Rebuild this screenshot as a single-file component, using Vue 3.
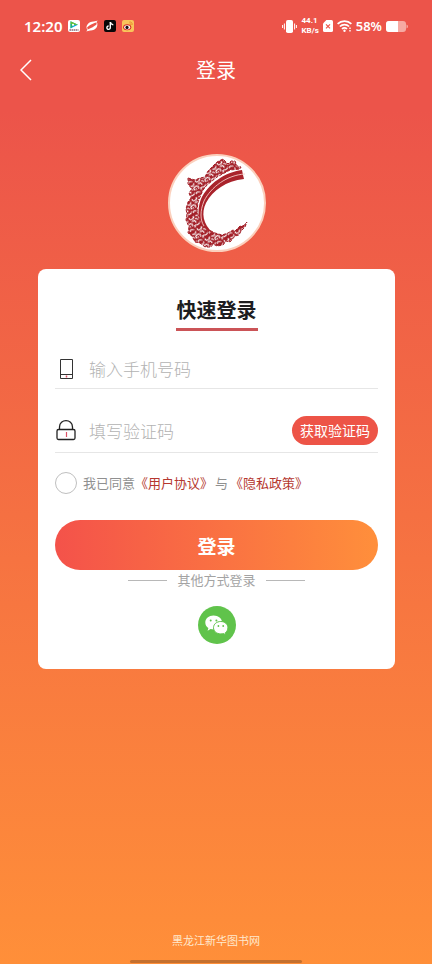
<template>
  <div class="page">
    <div class="status">
      <div class="status__side">
        <span class="status__time">12:20</span>
        <svg class="app-icon" viewBox="0 0 12 12">
          <rect width="12" height="12" rx="2" fill="#fff" />
          <path d="M2.5 1.2 10 4.8 2.5 8.4Z" fill="#12a8e8" />
          <path d="M2.5 1.2 10 4.8 6 5 2.5 4Z" fill="#63c132" />
          <path d="M2.5 4 6 5 2.5 8.4Z" fill="#27b36a" />
          <circle cx="5" cy="4.8" r="1.1" fill="#fff" />
          <path d="M1.5 10h9" stroke="#8a6b78" stroke-width="1.5" stroke-dasharray="1.5 .5" />
        </svg>
        <svg class="app-icon" viewBox="0 0 12 12" fill="#fff">
          <path d="M.6 8.2C-.2 4.4 4.4 .6 8.6 1.6L11.6 .6C10.8 3.2 3.6 4.2 .6 8.2Z" />
          <path d="M11.2 3.6C12.4 7.6 7.6 11.6 3.4 10.4L.4 11.4C1.2 8.8 8.2 7.8 11.2 3.6Z" />
          <path d="M1 8.2Q1.2 10 3.4 10.6M8.6 1.5Q10.8 2 11 3.8" fill="none" stroke="#fff" stroke-width=".8" />
        </svg>
        <svg class="app-icon" viewBox="0 0 12 12">
          <rect width="12" height="12" rx="2" fill="#090708" />
          <path d="M6.3 2v5.6A1.7 1.7 0 1 1 4.6 6" fill="none" stroke="#fff" stroke-width="1.4" />
          <path d="M6.4 2C6.7 3.8 7.8 4.6 9.3 4.7" fill="none" stroke="#fff" stroke-width="1.4" />
        </svg>
        <svg class="app-icon" viewBox="0 0 12 12">
          <rect width="12" height="12" rx="2" fill="#f9c45b" />
          <ellipse cx="5.2" cy="7.2" rx="4.1" ry="3" fill="#d72c25" />
          <ellipse cx="5.2" cy="7.3" rx="3" ry="2.1" fill="#fff" />
          <circle cx="5" cy="7.4" r="1.6" fill="#171011" />
          <path d="M7.2 2.1C9.4 1.7 10.6 3.2 10 5M7.7 3.7C8.7 3.6 9 4.2 8.7 5" fill="none" stroke="#e67d25" stroke-width=".8" />
        </svg>
      </div>
      <div class="status__side status__side--right">
        <svg class="vibrate" viewBox="0 0 15 13">
          <rect x="4" y="0" width="7" height="13" rx="1.8" fill="#fff" />
          <path d="M2.4 3.5v6M.6 5v3M12.6 3.5v6M14.4 5v3" stroke="#fff" stroke-width="1" />
        </svg>
        <span class="status__speed">
          <span>44.1</span>
          <span>KB/s</span>
        </span>
        <svg class="sim" viewBox="0 0 10 12">
          <path d="M3.4 0H8.4Q10 0 10 1.6V10.4Q10 12 8.4 12H1.6Q0 12 0 10.4V3.5Z" fill="#fff" />
          <path d="m3 4.4 4 4m0-4-4 4" stroke="#ed554a" stroke-width="1.2" />
        </svg>
        <svg class="wifi" viewBox="0 0 15 12" fill="none" stroke="#fff" stroke-width="1.7">
          <path d="M.6 3.8C4.4.1 10.6.1 14.4 3.8M2.9 6.5C5.4 4 9.6 4 12.1 6.5M5 9C6.4 7.6 8.6 7.6 10 9" />
          <circle cx="7.5" cy="10.7" r="1.2" fill="#fff" stroke="none" />
          <path d="M13 7.5v1.4M13 10v1.4" stroke-width="1.4" />
        </svg>
        <span class="status__percent">58%</span>
        <svg class="battery" viewBox="0 0 22 11">
          <rect width="20" height="11" rx="3" fill="#f6aaa3" />
          <path d="M3 0H12V11H3Q0 11 0 8V3Q0 0 3 0Z" fill="#fff" />
          <path d="M20.5 3.5Q22 4 22 5.5T20.5 7.5Z" fill="#f6aaa3" />
        </svg>
      </div>
    </div>

    <header class="header">
      <button class="header__back" type="button" aria-label="返回">
        <svg viewBox="0 0 12 22" fill="none" stroke="#fff" stroke-width="1.5">
          <path d="M11 1 1 11l10 10" />
        </svg>
      </button>
      <h1 class="header__title">登录</h1>
    </header>

    <main class="content">
      <div class="logo">
        <svg viewBox="13 12 94 94">
          <defs>
            <pattern id="curls" width="14" height="13" patternUnits="userSpaceOnUse" patternTransform="rotate(-38)">
              <rect width="14" height="13" fill="#a31f28" />
              <path
                d="M0 2Q3 4.5 5 1.5M7.5 0Q7 3 9.5 3T12 1M1.5 8Q.5 5 4 5.2T5.5 9M7.5 5Q11.5 4 10.5 8M12.5 4 14 6.5M0 11.5Q2.5 9.5 4.5 12.5M7 11.5Q7 8.5 9.5 10T13.5 9.5M3.5 7.2 2.8 8.6"
                fill="none"
                stroke="#fff"
                stroke-width="1.2"
              />
            </pattern>
          </defs>
          <path
            d="M31 34 38 36 43 34 48 33 51 27 55 23 60 18 66 15 68 17 71 20 74 17 78 17 80 22 84 23 83 25 73 26 60 33 50 41 46 46 41 58 40 67 43 77 48 84 58 89 65 91 71 89 76 86 78 87 83 82 86 82 90 78 88 83 84 87 82 91 78 92 73 98 69 97 66 101 60 102 56 100 54 103 48 103 43 99 38 98 35 92 31 89 32 83 29 76 30 70 29 65 31 58 34 54 32 49 35 45 31 40Z"
            fill="url(#curls)"
            stroke="#a31f28"
            stroke-width="1"
            stroke-dasharray="3 1.5"
          />
          <path d="M85 26C68 28 51 40 44 55C39 68 41 83 56 89C46 80 44 69 49 59C56 46 69 37 87 35L86 31Z" fill="#a9232b" />
          <path d="M88 30C70 31 54 43 47 57C43 67 43 76 47 82" fill="none" stroke="#f5c9c5" stroke-width=".9" />
        </svg>
      </div>

      <form class="card" @submit.prevent>
        <h2 class="card__title">快速登录</h2>

        <div class="field field--phone">
          <label class="field__icon" for="phone">
            <svg viewBox="0 0 22 22" fill="none">
              <path d="M5.5 1.5h12v19h-12zM5.5 16.5h12" stroke="#333" />
              <path d="M11.5 17.5v2" stroke="#dc5267" stroke-width="1.5" />
            </svg>
          </label>
          <input id="phone" v-model="phone" class="field__input" type="tel" placeholder="输入手机号码" aria-label="手机号码">
        </div>

        <div class="field field--code">
          <label class="field__icon" for="code">
            <svg viewBox="0 0 22 22" fill="none">
              <path d="M4.5 10V8C4.5-.5 17.5-.5 17.5 8v2" stroke="#222" stroke-width="1.3" />
              <rect x="2" y="10.5" width="18" height="10" rx="1.5" stroke="#222" stroke-width="1.3" />
              <path d="M11.5 13v5" stroke="#dc5267" stroke-width="1.2" />
            </svg>
          </label>
          <input id="code" v-model="code" class="field__input" type="text" placeholder="填写验证码" aria-label="验证码">
          <button class="field__send" type="button">获取验证码</button>
        </div>

        <div class="agree">
          <input id="agree" v-model="agreed" class="agree__check" type="checkbox">
          <label for="agree">我已同意</label>
          <a href="#">《用户协议》</a>
          <span class="agree__and">与</span>
          <a href="#">《隐私政策》</a>
        </div>

        <button class="submit" type="submit">登录</button>

        <div class="other">其他方式登录</div>

        <button class="wechat" type="button" aria-label="微信登录">
          <svg viewBox="0 0 38 38">
            <circle cx="19" cy="19" r="19" fill="#60c34b" />
            <path d="M15.5 9.5c-4.7 0-8.2 3-8.2 7 0 2.4 1.2 4.2 3.1 5.5l-.8 2.7 3-1.6c1 .3 2 .4 3.2.4 4.7 0 8.3-3 8.3-7s-3.7-7-8.6-7Z" fill="#fff" />
            <path d="M22.8 15.5c-4.2 0-7.3 2.7-7.3 6.2s3.1 6.2 7.3 6.2c1 0 1.9-.1 2.7-.4l2.5 1.4-.6-2.3c1.5-1.1 2.5-2.8 2.5-4.9 0-3.5-3-6.2-7.1-6.2Z" fill="#fff" stroke="#60c34b" />
            <g fill="#60c34b">
              <circle cx="12.7" cy="14.4" r="1" />
              <circle cx="18.4" cy="14.4" r="1" />
              <circle cx="20.4" cy="20" r=".9" />
              <circle cx="25.2" cy="20" r=".9" />
            </g>
          </svg>
        </button>
      </form>
    </main>

    <footer class="footer">
      <p class="footer__name">黑龙江新华图书网</p>
      <div class="footer__bar"></div>
    </footer>
  </div>
</template>

<script setup>
import { ref } from 'vue';

const phone = ref('');
const code = ref('');
const agreed = ref(false);
</script>

<style>
body {
  margin: 0;
}
</style>

<style scoped>
* {
  box-sizing: border-box;
}

.page {
  display: flex;
  flex-direction: column;
  min-height: 100vh;
  font-family: "Noto Sans", "Noto Sans CJK SC", sans-serif;
  background: linear-gradient(180deg, #ec544a 110px, #ff8f39 100%);
}

button {
  padding: 0;
  border: none;
  font-family: inherit;
  cursor: pointer;
}

svg {
  display: block;
}

.status {
  display: flex;
  justify-content: space-between;
  align-items: center;
  height: 52px;
  padding: 0 24px;
  color: #fff;
}

.status__side {
  display: flex;
  align-items: center;
  gap: 6px;
}

.status__side--right {
  gap: 4px;
}

.status__time {
  font-size: 15px;
  font-weight: 600;
  line-height: 20px;
}

.app-icon {
  width: 12px;
  height: 12px;
}

.vibrate {
  width: 15px;
  height: 13px;
}

.status__speed {
  display: flex;
  flex-direction: column;
  font-family: Roboto, sans-serif;
  font-size: 8px;
  font-weight: 700;
  line-height: 10px;
}

.sim {
  width: 10px;
  height: 12px;
}

.wifi {
  width: 15px;
  height: 12px;
}

.status__percent {
  font-size: 13px;
  font-weight: 600;
  line-height: 20px;
}

.battery {
  width: 22px;
  height: 11px;
}

.header {
  display: grid;
  grid-template-columns: 52px 1fr 52px;
  align-items: center;
  height: 36px;
}

.header__back {
  display: flex;
  justify-content: center;
  background: none;
}

.header__back svg {
  width: 12px;
  height: 22px;
}

.header__title {
  margin: 0;
  padding-top: 2px;
  color: #fff;
  font-size: 20px;
  font-weight: 400;
  line-height: 28px;
  text-align: center;
}

.content {
  flex: 1;
  padding: 66px 37px 24px 38px;
}

.logo {
  width: 98px;
  height: 98px;
  margin: 0 auto 17px;
  border: 2px solid #fbd0bd;
  border-radius: 50%;
  background: #fff;
}

.card {
  display: flex;
  flex-direction: column;
  padding: 26px 17px 25px;
  border-radius: 8px;
  background: #fff;
}

.card__title {
  align-self: center;
  margin: 0;
  padding: 0 1px 1px;
  border-bottom: 3px solid #cb5457;
  color: #1d1d1f;
  font-size: 20px;
  font-weight: 700;
  line-height: 32px;
}

.field {
  display: flex;
  align-items: center;
  border-bottom: 1px solid #e6e6e6;
}

.field--phone {
  height: 40px;
  margin-top: 18px;
}

.field--code {
  height: 45px;
  margin-top: 19px;
}

.field__icon svg {
  width: 22px;
  height: 22px;
}

.field__input {
  flex: 1;
  min-width: 0;
  height: 32px;
  margin-left: 12px;
  padding: 2px 0 0;
  border: none;
  outline: none;
  background: none;
  color: #333;
  font-family: inherit;
  font-size: 17px;
  font-weight: 300;
}

.field__input::placeholder {
  color: #b2b2b2;
}

.field__send {
  width: 86px;
  height: 29px;
  border-radius: 15px;
  background: #ed5447;
  color: #fff;
  font-size: 14px;
}

.agree {
  display: flex;
  align-items: center;
  margin-top: 19px;
  color: #909090;
  font-size: 13px;
  line-height: 22px;
}

.agree__check {
  appearance: none;
  width: 22px;
  height: 22px;
  margin: 0 6px 0 0;
  border: 1px solid #bfbfbf;
  border-radius: 50%;
}

.agree__check:checked {
  background: #ed5447;
}

.agree__and {
  margin: 0 2px;
}

.agree a {
  color: #b5372f;
  text-decoration: none;
}

.submit {
  height: 50px;
  margin-top: 26px;
  padding-top: 2px;
  border-radius: 25px;
  background: linear-gradient(90deg, #f4524a, #ff8f3b);
  color: #fff;
  font-size: 19px;
  font-weight: 700;
}

.other {
  display: flex;
  justify-content: center;
  align-items: center;
  gap: 10px;
  color: #a3a3a3;
  font-size: 13px;
  line-height: 20px;
}

.other::before,
.other::after {
  content: '';
  width: 39px;
  height: 1px;
  background: #b8b8b8;
}

.wechat {
  align-self: center;
  margin: 16px 0 0;
  border-radius: 50%;
  background: none;
}

.wechat svg {
  width: 38px;
  height: 38px;
}

.footer {
  display: flex;
  flex-direction: column;
  align-items: center;
  gap: 11px;
  padding-bottom: 1px;
}

.footer__name {
  margin: 0;
  color: #ffe9cf;
  font-size: 11px;
  line-height: 16px;
}

.footer__bar {
  width: 172px;
  height: 3px;
  border-radius: 2px;
  background: #c4702f;
}
</style>
